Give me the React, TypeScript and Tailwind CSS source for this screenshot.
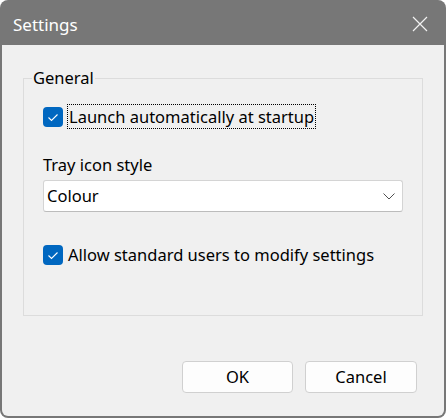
const font = { fontFamily: '"Segoe UI", "Noto Sans", "Liberation Sans", sans-serif' };

function CheckBox() {
    return (
        <span className="w-[20px] h-[20px] rounded-[4px] bg-[#0067c0] flex items-center justify-center shrink-0">
            <svg width="20" height="20" viewBox="0 0 20 20" fill="none">
                <path d="M5.5 10.5 L8.5 13.5 L14.5 7.5" stroke="#ffffff" strokeWidth="1.1" />
            </svg>
        </span>
    );
}

export default function App() {
    return (
        <div className="w-[446px] h-[418px] bg-[#777777] rounded-[8px] p-[2px] flex flex-col text-[16.5px] text-black" style={font}>
            {/* title bar */}
            <div className="h-[43px] flex items-center justify-between pl-[11px] pr-[16px] shrink-0">
                <span className="text-white text-[17px] leading-none mt-[1px]">Settings</span>
                <svg width="16" height="16" viewBox="0 0 16 16" fill="none" className="mt-[1px]">
                    <path d="M1 1 L15 15 M15 1 L1 15" stroke="#f2f2f2" strokeWidth="1.2" />
                </svg>
            </div>

            <div className="flex-1 bg-[#f0f0f0] rounded-b-[6px] flex flex-col pt-[33px]">
                {/* group box */}
                <div className="relative mx-[21px] h-[238px] border border-[#dcdcdc] pl-[19px] pr-[19px] pt-[25px]">
                    <span className="absolute left-[8px] -top-[12px] bg-[#f0f0f0] px-[1px] leading-[22px]">General</span>

                    <div className="flex items-center gap-[4px]">
                        <CheckBox />
                        <span className="border border-dotted border-black px-[1px] leading-[23px]">Launch automatically at startup</span>
                    </div>

                    <div className="mt-[25px] leading-[22px]">Tray icon style</div>
                    <div className="mt-[4px] h-[32px] bg-white border border-[#d4d4d4] border-b-[#bcbcbc] rounded-[3px] flex items-center justify-between pl-[3px] pr-[7px]">
                        <span>Colour</span>
                        <svg width="12" height="7" viewBox="0 0 12 7" fill="none">
                            <path d="M0.5 0.5 L6 6 L11.5 0.5" stroke="#505050" strokeWidth="1" />
                        </svg>
                    </div>

                    <div className="mt-[31px] flex items-center gap-[5px]">
                        <CheckBox />
                        <span className="leading-[23px]">Allow standard users to modify settings</span>
                    </div>
                </div>

                <div className="flex-1" />

                {/* buttons */}
                <div className="flex justify-end gap-[12px] pr-[27px] pb-[23px]">
                    <button className="w-[111px] h-[32px] bg-[#fdfdfd] border border-[#d0d0d0] rounded-[4px] text-[16.5px]">OK</button>
                    <button className="w-[112px] h-[32px] bg-[#fdfdfd] border border-[#d0d0d0] rounded-[4px] text-[16.5px]">Cancel</button>
                </div>
            </div>
        </div>
    );
}
